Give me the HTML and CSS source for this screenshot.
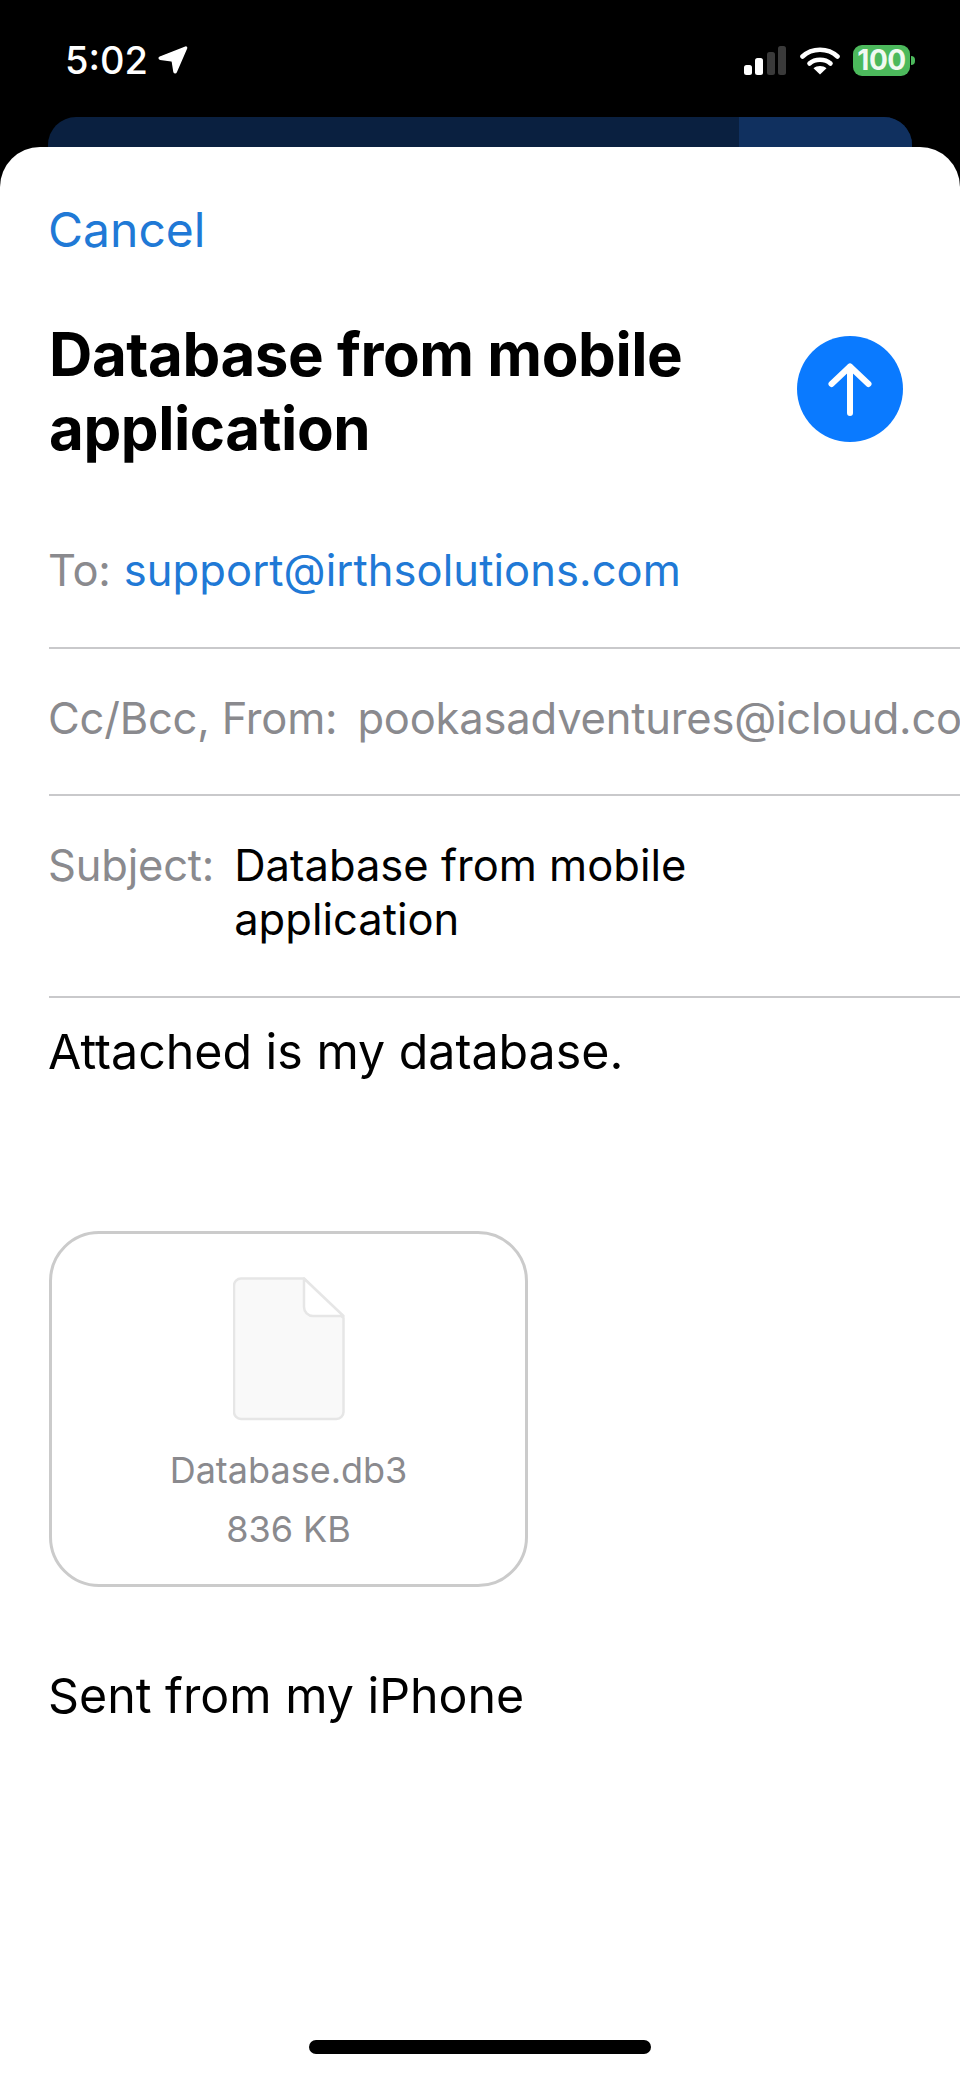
FILE: index.html
```html
<!DOCTYPE html>
<html lang="en">
<head>
<meta charset="utf-8">
<title>Database from mobile application</title>
<link rel="stylesheet" href="styles.css">
</head>
<body>
<div class="phone">
  <header class="status">
    <div class="status-left">
      <span class="time">5:02</span>
      <svg class="loc" width="30" height="30" viewBox="0 0 30 30"><path d="M27.500 2.200c.8-.3 1.200.3 1 1L18.200 27c-.5 1.200-2 1-2.200-.3l-1.600-10c-.1-.6-.4-.9-1-1L2.200 14.200C1 14 .8 12.600 2 12.100z" fill="#fff" stroke="#fff" stroke-width="1.500" stroke-linejoin="round"/></svg>
    </div>
    <div class="status-right">
      <svg class="signal" width="42" height="30" viewBox="0 0 42 30"><rect x="0" y="19" width="8" height="10" rx="2.5" fill="#fff"/><rect x="11" y="12" width="8" height="17" rx="2.5" fill="#fff"/><rect x="23" y="6" width="8" height="23" rx="2.5" fill="#3a3a3a"/><rect x="34" y="0" width="8" height="29" rx="2.5" fill="#3a3a3a"/></svg>
      <svg class="wifi" width="40" height="30" viewBox="0 0 40 30"><path d="M2.500 11.500C12 2.500 28 2.500 37.500 11.500" fill="none" stroke="#fff" stroke-width="4.600" stroke-linecap="round"/><path d="M9.500 18.500C15 13.500 25 13.500 30.500 18.500" fill="none" stroke="#fff" stroke-width="4.600" stroke-linecap="round"/><path d="M13.500 23.300c3.500-3 9.500-3 13 0L20 29.500z" fill="#fff"/></svg>
      <div class="battery"><span class="battery-body">100</span><span class="battery-cap"></span></div>
    </div>
  </header>
  <div class="backdrop"><div class="backdrop-accent"></div></div>
  <main class="sheet">
    <div class="cancel">Cancel</div>
    <div class="title-row">
      <h1 class="title">Database from mobile application</h1>
      <div class="send">
        <svg width="106" height="106" viewBox="0 0 106 106"><path d="M53 77V30.500M34.500 48L53 30.500 71.500 48" fill="none" stroke="#fff" stroke-width="6" stroke-linecap="round" stroke-linejoin="round"/></svg>
      </div>
    </div>
    <div class="field field-to"><span class="label">To:</span><span class="link">support@irthsolutions.com</span></div>
    <div class="field field-from"><span class="label">Cc/Bcc, From:</span><span class="label">pookasadventures@icloud.com</span></div>
    <div class="field field-subject"><span class="label">Subject:</span><span class="subject-value">Database from mobile application</span></div>
    <p class="body-text intro">Attached is my database.</p>
    <div class="attachment">
      <svg class="doc" width="112" height="144" viewBox="0 0 112 144"><path d="M8 1.500H71L110.500 41V135a7 7 0 0 1-7 7H8a7 7 0 0 1-7-7V8.500a7 7 0 0 1 7-7z" fill="#f9f9f9" stroke="#e6e6e6" stroke-width="2.500" stroke-linejoin="round"/><path d="M71 1.500V30a9 9 0 0 0 9 9h30.500L71 1.500z" fill="#fff" stroke="#e6e6e6" stroke-width="2.500" stroke-linejoin="round"/></svg>
      <div class="file-name">Database.db3</div>
      <div class="file-size">836 KB</div>
    </div>
    <p class="body-text signature">Sent from my iPhone</p>
    <div class="home-indicator"></div>
  </main>
</div>
</body>
</html>
```
FILE: styles.css
```css
* { box-sizing: border-box; }
html, body { margin: 0; padding: 0; background: #000; }
body { font-family: Inter, "Liberation Sans", sans-serif; }
.phone { width: 960px; height: 2079px; overflow: hidden; display: flex; flex-direction: column; background: #000; }

.status { height: 117px; padding: 45px 45px 0 65px; display: flex; justify-content: space-between; align-items: flex-start; flex: none; }
.status-left { display: flex; align-items: center; gap: 10px; height: 32px; margin-top: -1px; }
.time { color: #fff; font-size: 38px; font-weight: 500; line-height: 32px; }
.loc { display: block; }
.status-right { display: flex; align-items: flex-start; }
.signal { display: block; margin: 1px 14px 0 0; }
.wifi { display: block; margin: 0 13px 0 0; }
.battery { display: flex; align-items: center; height: 31px; }
.battery-body { width: 57px; height: 31px; background: #4cb95c; border-radius: 9px; color: #f1f9f1; font-size: 28px; font-weight: 700; line-height: 31px; text-align: center; letter-spacing: -.5px; }
.battery-cap { width: 4px; height: 9px; margin-left: 1px; background: #4cb95c; border-radius: 0 4px 4px 0; }

.backdrop { height: 30px; margin: 0 48px; flex: none; background: #0a2040; border-radius: 28px 28px 0 0; display: flex; justify-content: flex-end; overflow: hidden; }
.backdrop-accent { width: 173px; background: #10305f; }

.sheet { flex: 1; background: #fff; border-radius: 40px 40px 0 0; padding-left: 49px; display: flex; flex-direction: column; overflow: hidden; }
.cancel { margin-top: 55px; height: 56px; color: #2079d6; font-size: 48px; line-height: 56px; margin-left: -1px; }
.title-row { display: flex; justify-content: space-between; align-items: center; padding-right: 57px; margin-top: 59px; height: 148px; }
.title { margin: 0; width: 700px; font-size: 60px; font-weight: 700; line-height: 74px; letter-spacing: -.45px; color: #000; }
.send { width: 106px; height: 106px; border-radius: 50%; background: #0a7aff; flex: none; margin-top: -5px; }
.send svg { display: block; }

.field { display: flex; font-size: 43.500px; line-height: 54px; white-space: nowrap; border-bottom: 2px solid #c9c9cb; }
.field-to { margin-top: 66px; height: 118px; padding-top: 12px; gap: 13px; }
.field-from { height: 147px; padding-top: 42px; gap: 21px; }
.field-subject { height: 202px; padding-top: 42px; gap: 20px; }
.label { color: #8a8a8e; margin-left: -1px; letter-spacing: -.2px; }
.link { color: #2079d6; letter-spacing: .08px; }
.subject-value { color: #000; white-space: normal; width: 500px; }

.body-text { margin: 0; color: #000; font-size: 48.300px; line-height: 56px; margin-left: -1px; }
.intro { margin-top: 26px; }
.attachment { width: 479px; height: 356px; margin-top: 151px; border: 3px solid #cbcbcb; border-radius: 50px; display: flex; flex-direction: column; align-items: center; padding-top: 43px; color: #8a8a8e; font-size: 36px; line-height: 42px; }
.doc { display: block; flex: none; margin-bottom: 28px; }
.file-size { margin-top: 17px; }
.signature { margin-top: 81px; }
.home-indicator { width: 342px; height: 14px; margin: auto 0 25px 260px; background: #000; border-radius: 7px; flex: none; }
```
